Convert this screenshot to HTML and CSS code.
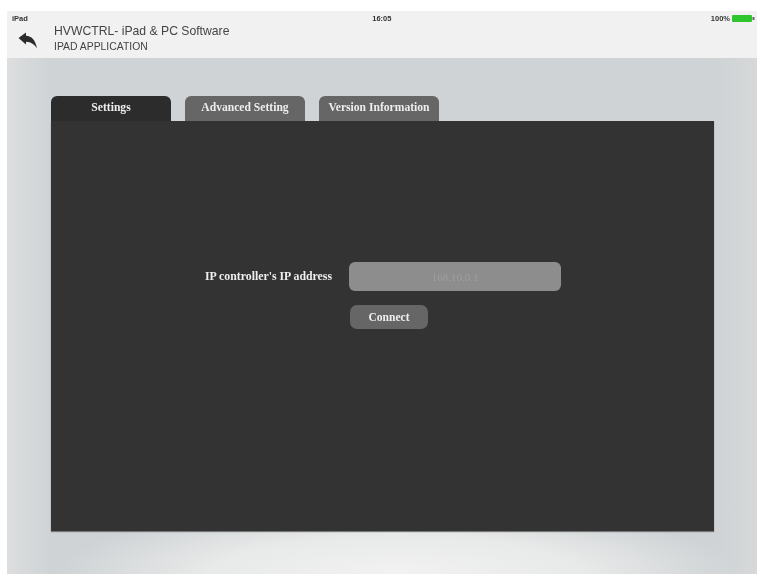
FILE: index.html
```html
<!DOCTYPE html>
<html lang="en">
<head>
<meta charset="utf-8">
<title>HVWCTRL</title>
<link rel="stylesheet" href="styles.css">
</head>
<body>
<div class="device">
  <header class="topbar">
    <div class="status">
      <span class="status-side">iPad</span>
      <span class="status-time">16:05</span>
      <span class="status-side status-right">
        <span>100%</span>
        <svg class="battery" width="25" height="7" viewBox="0 0 25 7"><rect width="20" height="7" rx="1" fill="#2fc52f"/><rect x="20.5" y="2" width="2" height="3" fill="#666"/></svg>
      </span>
    </div>
    <div class="title-row">
      <svg class="back" width="20" height="17" viewBox="0 0 20 17"><path d="M0.5 6 L8 0.5 L8 3.8 C13.5 4 17.5 8 19 16.5 C16.5 12.5 13.5 10 8 9.8 L8 12.5 Z" fill="#2b2b2b"/></svg>
      <div class="titles">
        <div class="title">HVWCTRL- iPad &amp; PC Software</div>
        <div class="subtitle">IPAD APPLICATION</div>
      </div>
    </div>
  </header>
  <main class="stage">
    <nav class="tabs">
      <div class="tab tab-active"><span class="soft">Settings</span></div>
      <div class="tab"><span class="soft">Advanced Setting</span></div>
      <div class="tab"><span class="soft">Version Information</span></div>
    </nav>
    <section class="panel">
      <div class="form-row">
        <label class="field-label soft">IP controller's IP address</label>
        <div class="field">168.10.0.1</div>
      </div>
      <div class="button-row">
        <div class="connect"><span class="soft">Connect</span></div>
      </div>
    </section>
  </main>
</div>
</body>
</html>
```
FILE: styles.css
```css
* { box-sizing: border-box; }
html, body { margin: 0; height: 100%; background: #fff; }
body { padding: 11px 5px 2px 7px; height: 576px; overflow: hidden; }
.device { display: flex; flex-direction: column; height: 563px; }
.topbar { height: 47px; background: #f1f1f1; color: #333; font-family: "Liberation Sans", Arial, sans-serif; flex: none; }
.status { display: flex; justify-content: space-between; align-items: center; height: 12px; padding: 0 0 0 5px; font-size: 7.5px; font-weight: bold; position: relative; top: 1px; }
.status-time { margin-left: 25px; filter: blur(0.4px); }
.status-right { display: flex; align-items: center; gap: 2px; }
.status-side { filter: blur(0.4px); }
.title-row { display: flex; padding-left: 11px; }
.back { margin-top: 9px; flex: none; }
.titles { margin-left: 16px; filter: blur(0.5px); }
.title { font-size: 12.2px; line-height: 14px; margin-top: 1px; color: #444; }
.subtitle { font-size: 10.4px; line-height: 13px; margin-top: 2px; color: #444; }
.stage { flex: 1; padding: 38px 43px 43px 44px; display: flex; flex-direction: column; background: radial-gradient(ellipse 340px 70px at 52% 100%, #f2f2f2 0%, #e8e9e9 55%, rgba(226,228,228,0) 100%), linear-gradient(90deg, #dcdedf 0, #cfd3d5 6%, #cfd3d5 94%, #d6d8d9 100%); }
.tabs { display: flex; gap: 14px; height: 25px; flex: none; }
.tab { width: 120px; height: 25px; background: #666; color: #eee; border-radius: 6px 6px 0 0; font-family: "Liberation Serif", "Times New Roman", serif; font-weight: bold; font-size: 11.6px; display: flex; align-items: center; justify-content: center; padding-bottom: 2px; white-space: nowrap; }
.tab-active { background: #2c2c2c; }
.soft { filter: blur(0.45px); }
.panel { flex: 1; background: #333; box-shadow: 0 1px 1px #777; display: flex; flex-direction: column; padding-top: 141px; font-family: "Liberation Serif", "Times New Roman", serif; color: #eee; }
.form-row { display: flex; align-items: center; height: 29px; padding-left: 154px; }
.field-label { width: 144px; font-size: 11.8px; font-weight: bold; white-space: nowrap; }
.field { width: 212px; height: 29px; background: #8d8d8d; border-radius: 6px; color: #9f9f9f; font-size: 11px; display: flex; align-items: center; justify-content: center; filter: blur(0.5px); }
.button-row { display: flex; padding: 14px 0 0 299px; }
.connect { width: 78px; height: 24px; background: #666; border-radius: 7px; font-size: 11.6px; font-weight: bold; display: flex; align-items: center; justify-content: center; }
```
